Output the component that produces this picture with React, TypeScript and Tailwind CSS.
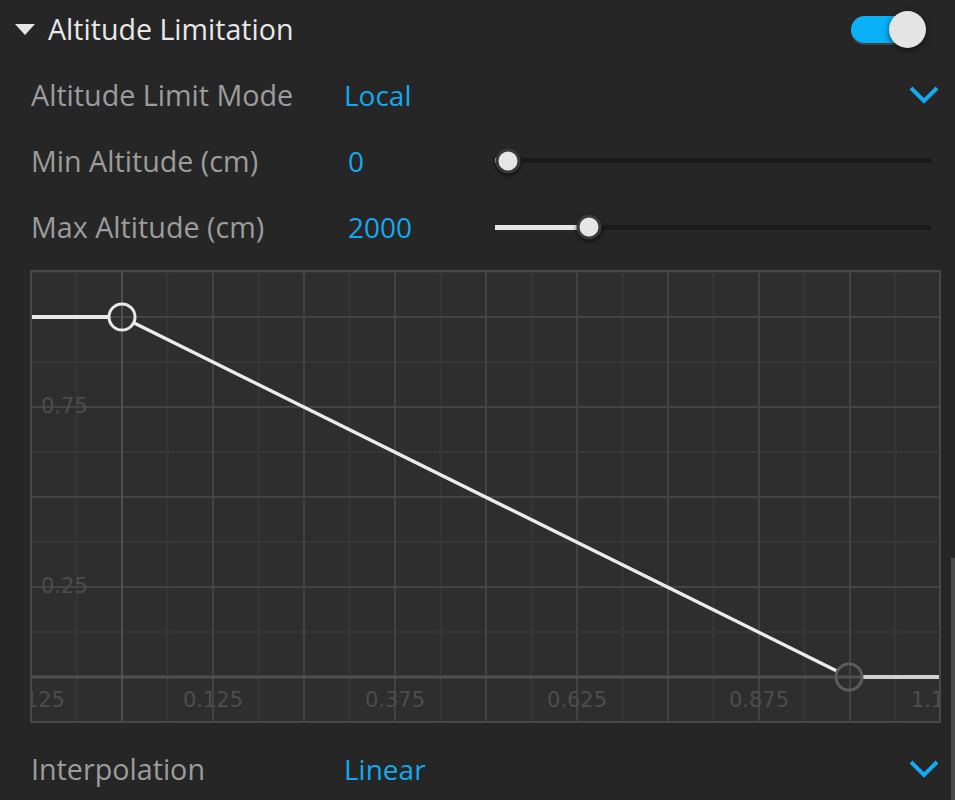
import type { ReactNode } from "react";

// curve editor geometry, in chart pixels
const W = 911;
const H = 453;
const X0 = 92; // x = 0
const X1 = 819; // x = 1
const Y1 = 47; // y = 1
const Y0 = 407; // y = 0
const R = 13;

const majorX = [1, 92, 183, 274, 365, 456, 547, 638, 729, 820];
const minorX = majorX.map((x) => x + 45.5).filter((x) => x < W);
const majorY = [47, 137, 227, 317, 407];
const minorY = [2, 92, 182, 272, 362];

const xLabels = [
  { x: 1, t: "-0.125" },
  { x: 183, t: "0.125" },
  { x: 365, t: "0.375" },
  { x: 547, t: "0.625" },
  { x: 729, t: "0.875" },
  { x: 911, t: "1.125" },
];

const Chevron = () => (
  <svg width="30" height="20" viewBox="0 0 30 20" className="shrink-0">
    <polyline points="2,3 15,16 28,3" fill="none" stroke="#12abf0" strokeWidth="4" />
  </svg>
);

const Row = ({ label, children, className }: { label: string; children: ReactNode; className: string }) => (
  <div className={`flex items-center pl-[31px] ${className}`}>
    <span className="w-[313px] shrink-0 text-[28.7px] text-[#9c9c9c]">{label}</span>
    {children}
  </div>
);

const Slider = ({ pct }: { pct: number }) => (
  <div className="relative flex-1 h-[5px] bg-[#1a1a1a]">
    <div className="absolute left-0 top-0 h-full bg-[#e6e6e6]" style={{ width: `calc(${pct}% + 12px)` }} />
    <div
      className="absolute top-1/2 w-[25px] h-[25px] -translate-x-1/2 -translate-y-1/2 rounded-full bg-[#e6e6e6] border-[3px] border-[#3a3a3a] shadow-[0_2px_4px_rgba(0,0,0,0.6)]"
      style={{ left: `calc(${pct}% + 13px)` }}
    />
  </div>
);

const CurveChart = () => {
  const len = Math.hypot(X1 - X0, Y0 - Y1);
  const dx = (R * (X1 - X0)) / len;
  const dy = (R * (Y0 - Y1)) / len;

  return (
    <svg width={W} height={H} viewBox={`0 0 ${W} ${H}`} className="block">
      <rect x="0" y="0" width={W} height={H} fill="#2e2e2e" />
      {minorX.map((x) => (
        <line key={`mx${x}`} x1={x} y1="0" x2={x} y2={H} stroke="#363636" strokeWidth="2" />
      ))}
      {minorY.map((y) => (
        <line key={`my${y}`} x1="0" y1={y} x2={W} y2={y} stroke="#363636" strokeWidth="2" />
      ))}
      {majorX.map((x) => (
        <line key={`Mx${x}`} x1={x} y1="0" x2={x} y2={H} stroke="#434343" strokeWidth="2" />
      ))}
      {majorY.map((y) => (
        <line key={`My${y}`} x1="0" y1={y} x2={W} y2={y} stroke="#434343" strokeWidth="2" />
      ))}
      <line x1={X0} y1="0" x2={X0} y2={H} stroke="#4f4f4f" strokeWidth="2" />
      <line x1="0" y1={Y0} x2={W} y2={Y0} stroke="#505050" strokeWidth="3" />

      <g fill="#4d4d4d" fontFamily="'DejaVu Sans', sans-serif" fontSize="21">
        <text x="11" y="143">0.75</text>
        <text x="11" y="323">0.25</text>
        {xLabels.map((l) => (
          <text key={l.t} x={l.x} y="437" textAnchor="middle">
            {l.t}
          </text>
        ))}
      </g>

      <line x1="0" y1={Y1} x2={X0 - R} y2={Y1} stroke="#e8e8e8" strokeWidth="4" />
      <line x1={X0 + dx} y1={Y1 + dy} x2={X1 - dx} y2={Y0 - dy} stroke="#ececec" strokeWidth="3.5" />
      <line x1={X1 + R} y1={Y0} x2={W} y2={Y0} stroke="#d0d0d0" strokeWidth="4" />
      <circle cx={X0} cy={Y1} r={R} fill="none" stroke="#e8e8e8" strokeWidth="3" />
      <circle cx={X1} cy={Y0} r={R} fill="none" stroke="#5c5c5c" strokeWidth="3" />

      <rect x="1" y="1" width={W - 2} height={H - 2} fill="none" stroke="#474747" strokeWidth="2" />
    </svg>
  );
};

export default function App() {
  return (
    <div
      className="relative w-[955px] h-[800px] overflow-hidden bg-[#262626]"
      style={{ fontFamily: "'Open Sans', 'Noto Sans', sans-serif" }}
    >
      {/* section header */}
      <div className="flex items-center h-[58px] pl-[15px] pr-[29px]">
        <svg width="20" height="11" viewBox="0 0 20 11" className="shrink-0">
          <polygon points="0,0 20,0 10,11" fill="#e6e6e6" />
        </svg>
        <span className="ml-[13px] text-[28.6px] text-[#e8e8e8]">Altitude Limitation</span>
        <div className="flex-1" />
        <div className="relative w-[75px] h-[37px]">
          <div className="absolute left-0 top-[5px] w-[62px] h-[27px] rounded-full bg-[#0ab0f8] shadow-[0_2px_0_#444]" />
          <div className="absolute right-0 top-0 w-[37px] h-[37px] rounded-full bg-[#e4e4e4] shadow-[0_2px_6px_rgba(0,0,0,0.6)]" />
        </div>
      </div>

      <Row label="Altitude Limit Mode" className="h-[66px] mt-[4px] pr-[16px]">
        <span className="text-[28px] text-[#14a9ef]">Local</span>
        <div className="flex-1" />
        <Chevron />
      </Row>

      <Row label="Min Altitude (cm)" className="h-[65px] pr-[24px]">
        <span className="w-[151px] shrink-0 pl-[4px] text-[28px] text-[#14a9ef]">0</span>
        <Slider pct={0} />
      </Row>

      <Row label="Max Altitude (cm)" className="h-[68px] pr-[24px]">
        <span className="w-[151px] shrink-0 pl-[4px] text-[28px] text-[#14a9ef]">2000</span>
        <Slider pct={18.5} />
      </Row>

      <div className="mt-[9px] ml-[30px] w-[911px] h-[453px]">
        <CurveChart />
      </div>

      <Row label="Interpolation" className="h-[66px] mt-[13px] pr-[16px]">
        <span className="text-[28px] text-[#14a9ef]">Linear</span>
        <div className="flex-1" />
        <Chevron />
      </Row>

      {/* scrollbar thumb */}
      <div className="absolute right-0 top-[558px] w-[4px] h-[242px] bg-[#4a4a4a]" />
    </div>
  );
}
